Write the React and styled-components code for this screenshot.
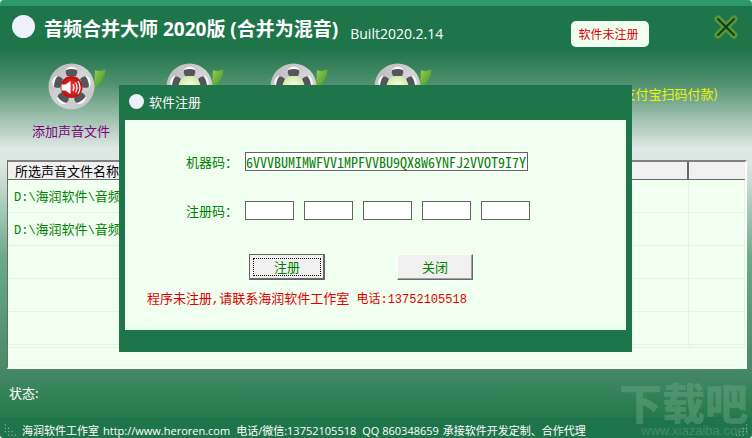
import React from "react";
import styled, { createGlobalStyle } from "styled-components";
import { useState } from "react";

const files = ["D:\\海润软件\\音频", "D:\\海润软件\\音频"];
const emptyRows = [1, 2, 3];
const machineCode = "6VVVBUMIMWFVV1MPFVVBU9QX8W6YNFJ2VVOT9I7Y";

function Reel({ sound }) {
	return (
		<svg width="58" height="48" viewBox="0 0 58 48" aria-hidden="true">
			<defs>
				<linearGradient id="disc" x1="0" y1="0" x2="1" y2="1">
					<stop offset="0" stopColor="#b5b7b9" />
					<stop offset="0.5" stopColor="#d3d4d5" />
					<stop offset="1" stopColor="#bfc1c2" />
				</linearGradient>
				<linearGradient id="leaf" x1="0" y1="0" x2="1" y2="1">
					<stop offset="0" stopColor="#94cf4c" />
					<stop offset="1" stopColor="#3f8c22" />
				</linearGradient>
				<radialGradient id="red">
					<stop offset="0" stopColor="#e8423a" />
					<stop offset="1" stopColor="#bd0d12" />
				</radialGradient>
				<radialGradient id="lime">
					<stop offset="0" stopColor="#ffffff" />
					<stop offset="1" stopColor="#d5eaa4" />
				</radialGradient>
			</defs>
			<path d="M47 7Q52 9 57.500 6.500Q57 18 46 26Z" fill="url(#leaf)" />
			<circle cx="23.500" cy="23.500" r="23" fill="url(#disc)" />
			{[0, 72, 144, 216, 288].map((angle) => (
				<g key={angle} transform={`rotate(${angle} 23.5 23.5)`}>
					<path d="M18 6Q23.500 1 29 6V8H18Z" fill="#fafafa" />
					<path d="M18 7Q23.500 5 29 7Q30 10 28 13H19Q17 10 18 7Z" fill="#55565a" />
				</g>
			))}
			<circle cx="23.500" cy="24" r="11" fill={sound ? "url(#red)" : "url(#lime)"} />
			{sound && (
				<g fill="none" stroke="#fff" strokeWidth="1.200">
					<path d="M13.500 21.500H17.500L22.500 18V31L17.500 27.500H13.500Z" fill="#fff" stroke="none" />
					<path d="M25 21Q27 24.500 25 28M27.500 19.500Q30.500 24.500 27.500 29.500M30 18Q34 24.500 30 31" />
				</g>
			)}
		</svg>
	);
}

function Grip({ flip }) {
	return (
		<GripSvg $flip={flip} width="12" height="12" viewBox="0 0 14 14" aria-hidden="true">
			<path
				d="M1 1h1M1 5h1M5 5h1M1 9h1M5 9h1M9 9h1M5 13h1M9 13h1M13 13h1"
				stroke="#a5c9b6"
				strokeWidth="1.500"
			/>
		</GripSvg>
	);
}

function RegisterDialog({ onClose }) {
	return (
		<Overlay>
			<Dialog role="dialog" aria-labelledby="dialog-title">
				<DialogTitle>
					<Dot $size={15} />
					<span id="dialog-title">软件注册</span>
				</DialogTitle>
				<DialogBody>
					<Field>
						<Label htmlFor="machine">机器码：</Label>
						<MachineInput id="machine" readOnly defaultValue={machineCode} />
					</Field>
					<Field>
						<Label htmlFor="code1">注册码：</Label>
						<CodeGroup>
							{[1, 2, 3, 4, 5].map((n) => (
								<CodeInput key={n} id={`code${n}`} aria-label={`注册码 ${n}`} />
							))}
						</CodeGroup>
					</Field>
					<ButtonRow>
						<DialogButton $primary>注册</DialogButton>
						<DialogButton onClick={onClose}>关闭</DialogButton>
					</ButtonRow>
					<Warning>
						程序未注册<Half>,</Half>请联系海润软件工作室<Half> 电话:13752105518</Half>
					</Warning>
				</DialogBody>
			</Dialog>
		</Overlay>
	);
}

function App() {
	const [open, setOpen] = useState(true);

	return (
		<>
			<GlobalStyle />
			<Window>
				<TitleBar>
					<Dot $size={23} />
					<Title>音频合并大师 2020版 (合并为混音)</Title>
					<Built>Built2020.2.14</Built>
					<Badge onClick={() => setOpen(true)}>软件未注册</Badge>
					<CloseButton aria-label="关闭">
						<svg width="24" height="24" viewBox="0 0 24 24">
							<path d="M4 4L20 20M20 4L4 20" stroke="#56963a" strokeWidth="7" strokeLinecap="round" />
							<path d="M4 4L20 20M20 4L4 20" stroke="#173c14" strokeWidth="2" strokeLinecap="round" />
						</svg>
					</CloseButton>
				</TitleBar>

				<Toolbar>
					<Tool $width={118}>
						<Reel sound />
						<span>添加声音文件</span>
					</Tool>
					<Tool $width={104}>
						<Reel />
					</Tool>
					<Tool $width={104}>
						<Reel />
					</Tool>
					<Tool $width={104}>
						<Reel />
					</Tool>
					<PayNote>(支付宝扫码付款)</PayNote>
				</Toolbar>

				<ListFrame>
					<FileTable>
						<thead>
							<tr>
								<th>所选声音文件名称</th>
								<LastHead aria-label="备注" />
							</tr>
						</thead>
						<tbody>
							{files.map((file, i) => (
								<tr key={i}>
									<td>
										<Half>{file.slice(0, 3)}</Half>
										{file.slice(3, 7)}
										<Half>\</Half>
										{file.slice(8)}
									</td>
									<td />
								</tr>
							))}
							{emptyRows.map((n) => (
								<tr key={n}>
									<td />
									<td />
								</tr>
							))}
							<FillRow>
								<td />
								<td />
							</FillRow>
						</tbody>
					</FileTable>
				</ListFrame>

				<Status>状态:</Status>
				<Footer>
					<Grip />
					<FooterText>
						<span>海润软件工作室</span>
						<a href="http://www.heroren.com">http://www.heroren.com</a>
						<Contact>电话/微信:13752105518</Contact>
						<Contact>QQ 860348659</Contact>
						<span>承接软件开发定制、合作代理</span>
					</FooterText>
					<Grip flip />
				</Footer>
				<Watermark>
					<strong>下载吧</strong>
					<span>www.xiazaiba.com</span>
				</Watermark>
			</Window>
			{open && <RegisterDialog onClose={() => setOpen(false)} />}
		</>
	);
}

export default App;

const GlobalStyle = createGlobalStyle`
  * {
    box-sizing: border-box;
  }
  body {
    margin: 0;
    background: #fff;
    font-family: "Noto Sans CJK SC", sans-serif;
    font-size: 13px;
    line-height: 16px;
  }
  button, input {
    font: inherit;
    border-radius: 0;
  }
`;

const Window = styled.main`
  position: relative;
  display: flex;
  flex-direction: column;
  min-height: 100vh;
  overflow: hidden;
  border-top: 6px solid #2e9a68;
  border-radius: 4px;
  background: linear-gradient(
    #1f754a 44px,
    #4d8f6d 76px,
    #dfe8e4 142px,
    #dbe6e1 160px,
    #6caa8a 250px,
    #488b66 360px,
    #257a4e 410px
  );
`;

const TitleBar = styled.header`
  display: flex;
  align-items: center;
  height: 41px;
  padding: 0 14px 0 12px;
  color: #fff;
`;

const Dot = styled.span`
  flex: none;
  width: ${({ $size }) => $size}px;
  height: ${({ $size }) => $size}px;
  border-radius: 50%;
  background: #ecf1fa;
`;

const Title = styled.h1`
  margin: 0 12px 0 9px;
  padding-top: 4px;
  font-family: "Open Sans", "Noto Sans CJK SC", sans-serif;
  font-size: 19px;
  line-height: 28px;
  white-space: nowrap;
`;

const Built = styled.span`
  padding-top: 14px;
  font-family: "Open Sans", sans-serif;
  font-size: 14px;
`;

const Badge = styled.button`
  width: 78px;
  height: 26px;
  margin: 15px 65px 0 auto;
  padding: 0 3px 0 0;
  border: 0;
  border-radius: 5px;
  background: #f0fff0;
  color: #e00000;
  font-size: 12px;
  white-space: nowrap;
`;

const CloseButton = styled.button`
  display: flex;
  padding: 0;
  border: 0;
  background: none;
`;

const Toolbar = styled.nav`
  display: flex;
  align-items: flex-start;
  height: 113px;
  padding: 16px 34px 0 24px;
`;

const Tool = styled.button`
  display: flex;
  flex: none;
  flex-direction: column;
  gap: 12px;
  width: ${({ $width }) => $width}px;
  padding: 0;
  border: 0;
  background: none;
  color: #800080;
  text-align: left;

  svg {
    margin-left: 24px;
  }
  span {
    padding-left: 8px;
  }
`;

const PayNote = styled.span`
  margin: 23px 0 0 auto;
  color: #e8f500;
  white-space: nowrap;
`;

const ListFrame = styled.section`
  display: flex;
  flex: 1;
  margin: 0 5px 0 7px;
  border: 2px solid #fff;
  border-top-color: #808080;
  border-left: 1px solid #6a6a6a;
  background: #f0fff0;
`;

const FileTable = styled.table`
  width: 100%;
  height: 100%;
  border-collapse: separate;
  border-spacing: 0;
  table-layout: fixed;

  th {
    height: 18px;
    padding: 0 0 0 7px;
    border-right: 2px solid #696969;
    border-bottom: 1px solid #696969;
    background: #f0f0f0;
    color: #000;
    font-weight: normal;
    text-align: left;
  }
  td {
    height: 33px;
    padding: 2px 0 0 6px;
    border-right: 1px solid #e4f3e6;
    border-bottom: 1px solid #e4f3e6;
    color: #008000;
    white-space: nowrap;
  }
  th:last-child {
    border-right: 0;
  }
`;

const LastHead = styled.th`
  width: 56px;
`;

const FillRow = styled.tr`
  && td {
    height: auto;
  }
`;

const Half = styled.span`
  font-family: "Liberation Mono", "Noto Sans CJK SC", monospace;
  font-size: 12px;
`;

const Status = styled.div`
  height: 48px;
  padding: 16px 9px;
  color: #fff;
`;

const Footer = styled.footer`
  display: flex;
  align-items: flex-end;
  height: 21px;
  padding: 0 4px;
  background: #1f754a;
  color: #fff;
`;

const FooterText = styled.div`
  display: flex;
  flex: 1;
  gap: 4px;
  padding-left: 6px;
  font-family: "Open Sans", "Noto Sans CJK SC", sans-serif;
  font-size: 11px;
  line-height: 14px;
  white-space: nowrap;

  a {
    color: inherit;
    text-decoration: none;
  }
`;

const Contact = styled.span`
  padding-left: 2px;
`;

const GripSvg = styled.svg`
  flex: none;
  margin-bottom: 2px;
  transform: ${({ $flip }) => ($flip ? "scaleX(-1)" : "none")};
`;

const Watermark = styled.div`
  position: absolute;
  right: 4px;
  bottom: 0;
  display: flex;
  flex-direction: column;
  align-items: flex-end;
  color: rgba(110, 170, 135, 0.45);
  pointer-events: none;

  strong {
    font-size: 43px;
    font-weight: 900;
    line-height: 44px;
  }
  span {
    font-family: "Liberation Sans", sans-serif;
    font-size: 13px;
    line-height: 15px;
  }
`;

const Overlay = styled.div`
  position: fixed;
  inset: 0;
  display: flex;
  align-items: center;
  justify-content: center;
  padding: 0 1px 1px 0;
`;

const Dialog = styled.section`
  width: 513px;
  max-width: 100%;
  padding: 0 6px 22px;
  background: #1f754a;
`;

const DialogTitle = styled.header`
  display: flex;
  align-items: center;
  gap: 5px;
  height: 35px;
  padding: 0 4px 2px;
  color: #fff;
`;

const DialogBody = styled.form`
  display: flex;
  flex-direction: column;
  height: 210px;
  padding: 32px 20px 0;
  background: #f0fff0;
  color: #008000;
`;

const Field = styled.div`
  display: flex;
  align-items: center;
  height: 19px;
  margin-bottom: 30px;
`;

const Label = styled.label`
  width: 59px;
  margin-left: 41px;
  white-space: nowrap;
`;

const TextInput = styled.input`
  height: 19px;
  padding: 0 1px;
  border: 1px solid #646464;
  background: #fff;
  color: #008000;
`;

const MachineInput = styled(TextInput)`
  width: 283px;
  padding: 0;
  font-family: "Noto Sans CJK SC", sans-serif;
  font-feature-settings: "hwid";
  font-size: 14px;
`;

const CodeGroup = styled.div`
  display: flex;
  gap: 10px;
`;

const CodeInput = styled(TextInput)`
  width: 49px;
`;

const ButtonRow = styled.div`
  display: flex;
  gap: 72px;
  margin: 4px 0 10px 104px;
`;

const DialogButton = styled.button.attrs({ type: "button" })`
  width: 76px;
  height: 26px;
  padding: 0;
  border: 1px solid;
  border-color: ${({ $primary }) => ($primary ? "#646464" : "#fff #696969 #696969 #fff")};
  background: #f0f0f0;
  box-shadow: inset -1px -1px ${({ $primary }) => ($primary ? "#696969" : "#a0a0a0")};
  color: #008000;
  outline: ${({ $primary }) => ($primary ? "1px dotted #000" : "none")};
  outline-offset: -5px;
`;

const Warning = styled.p`
  margin: 0 0 0 2px;
  color: #e00000;
  white-space: nowrap;
`;
